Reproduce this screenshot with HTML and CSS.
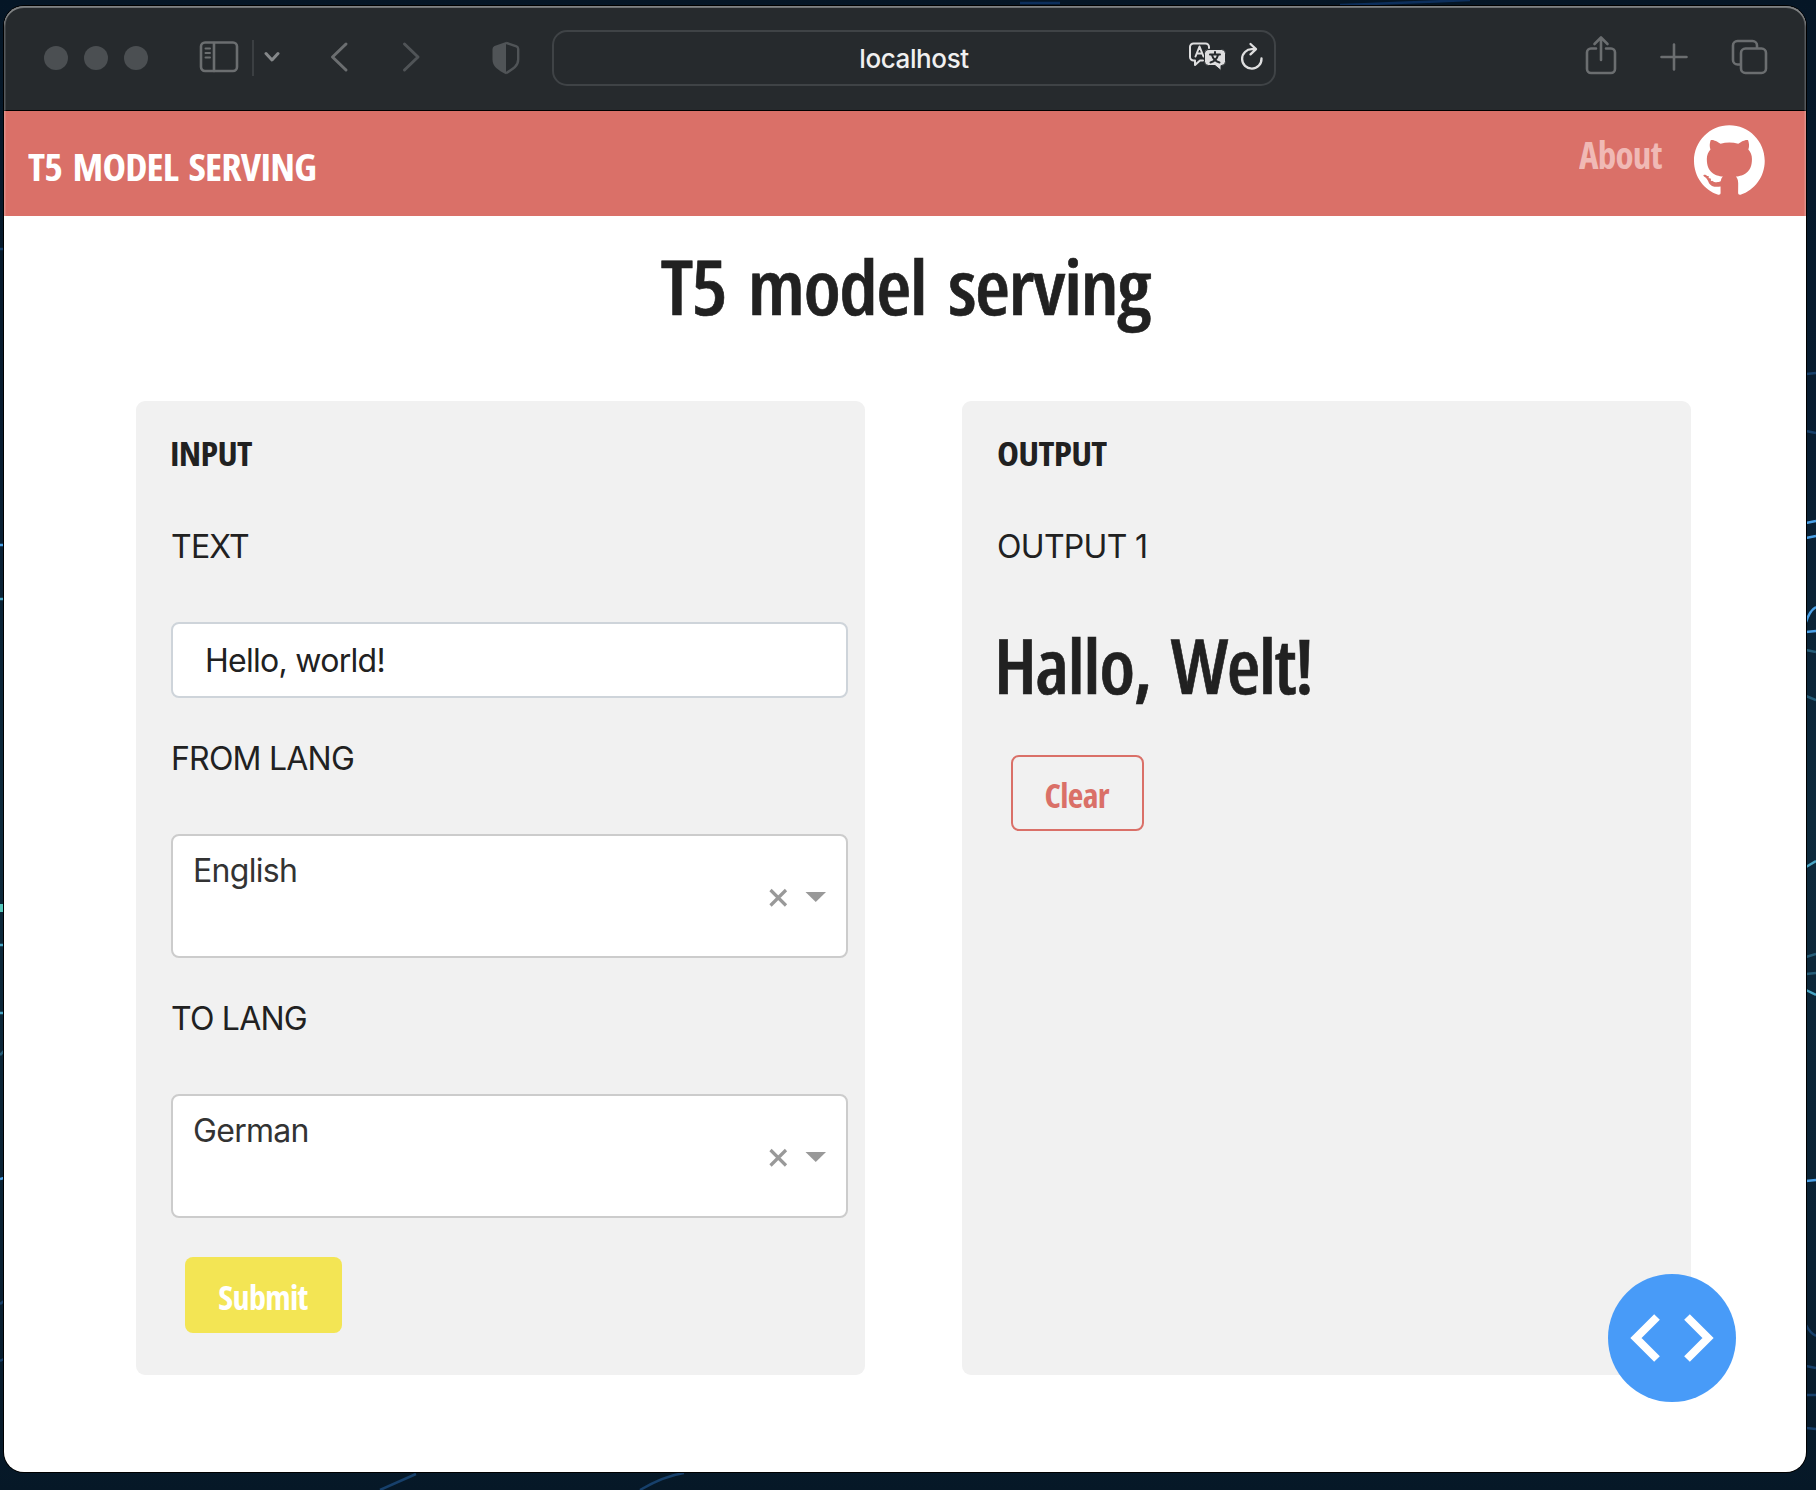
FILE: index.html
```html
<!DOCTYPE html>
<html lang="en">
<head>
<meta charset="utf-8">
<title>T5 model serving</title>
<link rel="stylesheet" href="styles.css">
</head>
<body>
<svg class="wallpaper" width="1816" height="1490" viewBox="0 0 1816 1490">
  <g stroke="#17406b">
    <path d="M1806 374l10-1M1806 431l10 2M1806 1325q4 8 10 11M1806 1366l10 2M1806 1395h10M1806 1428l10 1M0 249h4M0 1304l4-3M0 1361l4-2M640 1490q24-14 44-17M380 1490l36-16"/>
  </g>
  <g stroke="#0d2f5c">
    <path d="M1340 5q60-2 130-5M1020 3h40"/>
  </g>
  <g stroke="#4aa0e6">
    <path d="M1806 523l10-2M1806 538l10-2M1806 622q4-12 10-15M1806 632l10-1M1806 1181l10-1M0 545h4M0 1179l4-1"/>
  </g>
  <g stroke="#48a5c4">
    <path d="M1806 867l10-6M1806 990l10 5M0 599h4M0 945h4M0 1013h4"/>
  </g>
  <g stroke="#255d78">
    <path d="M1806 650l10 2M1806 696l10 4M1806 957l10-3M1806 974l10-1M0 1055l4-4"/>
  </g>
  <path stroke="#57c8bd" stroke-width="8" d="M0 908h4"/>
</svg>
<main class="window">
  <header class="toolbar">
    <div class="lights"><i></i><i></i><i></i></div>
    <svg class="ic sidebar" width="40" height="32" viewBox="0 0 40 32"><rect x="2" y="1.500" width="36" height="28.500" rx="4"/><path d="M15 2v28"/><path class="rows" d="M6.500 7.500h4.500M6.500 12h4.500M6.500 16.500h4.500"/></svg>
    <span class="divider"></span>
    <svg class="ic chev" width="16" height="12" viewBox="0 0 16 12"><path d="M2 2.500L8 9l6-6.500"/></svg>
    <svg class="ic back" width="20" height="32" viewBox="0 0 20 32"><path d="M17 3L3.500 16 17 29"/></svg>
    <svg class="ic fwd" width="20" height="32" viewBox="0 0 20 32"><path d="M3.500 3L17 16 3.500 29"/></svg>
    <svg class="shield" width="28" height="34" viewBox="0 0 28 34"><path class="line" d="M14 1.800L24.500 5.300Q26.200 6 26.200 8v10.500c0 6.500-5 9.500-12.200 13.700"/><path class="half" d="M14 1L2.500 5Q.500 5.800.500 8v10.500C.500 25.500 6 29 14 33.300z"/></svg>
    <div class="address">
      <span class="host">localhost</span>
      <svg class="translate" width="40" height="30" viewBox="0 0 40 30"><path class="o" d="M21 6V5a3.500 3.500 0 0 0-3.500-3.500h-12A3.500 3.500 0 0 0 2 5v10a3.500 3.500 0 0 0 3.500 3.500H7V23l5-4.500h3"/><path class="o" d="M7.500 14.500l4-10 4 10M9 11.500h5"/><path class="f" d="M20.500 7.500h13a4 4 0 0 1 4 4V19.500a4 4 0 0 1-4 4H33v5l-6-5h-6.500a4 4 0 0 1-4-4v-8a4 4 0 0 1 4-4z"/><path class="d" d="M22 12.500h10M27 10v2.500M30 13c-1 4-4 6.500-7.500 7.500M24 13c1 4 4 6.500 7.500 7.500"/></svg>
      <svg class="reload" width="24" height="30" viewBox="0 0 24 30"><path d="M21.500 16.500A9.700 9.700 0 1 1 12 7.200h3.500M10.500 2l5.500 5.200-5.500 5.200"/></svg>
    </div>
    <svg class="ic share" width="32" height="40" viewBox="0 0 32 40"><path d="M11 13.500H6a4 4 0 0 0-4 4V34a4 4 0 0 0 4 4h20a4 4 0 0 0 4-4V17.500a4 4 0 0 0-4-4h-5M16 25V3M9.500 9L16 2.500 22.500 9"/></svg>
    <svg class="ic plus" width="28" height="28" viewBox="0 0 28 28"><path d="M14 1.500v25M1.500 14h25"/></svg>
    <svg class="ic tabs" width="38" height="36" viewBox="0 0 38 36"><rect x="11" y="9.500" width="25" height="24.500" rx="4.500"/><path d="M10 25.500H7.500A4.500 4.500 0 0 1 3 21V6.500A4.500 4.500 0 0 1 7.500 2h15A4.500 4.500 0 0 1 27 6.500V8.500"/></svg>
  </header>
  <nav class="navbar">
    <a class="brand">T5 MODEL SERVING</a>
    <a class="about">About</a>
    <svg class="github" width="71" height="70" viewBox="0 0 98 96"><path d="M48.854 0C21.839 0 0 22 0 49.217c0 21.756 13.993 40.172 33.405 46.690 2.427.490 3.316-1.059 3.316-2.362 0-1.141-.080-5.052-.080-9.127-13.590 2.934-16.420-5.867-16.420-5.867-2.184-5.704-5.420-7.170-5.420-7.170-4.448-3.015.324-3.015.324-3.015 4.934.326 7.523 5.052 7.523 5.052 4.367 7.496 11.404 5.378 14.235 4.074.404-3.178 1.699-5.378 3.074-6.600-10.839-1.141-22.243-5.378-22.243-24.283 0-5.378 1.940-9.778 5.014-13.200-.485-1.222-2.184-6.275.486-13.038 0 0 4.125-1.304 13.426 5.052a46.970 46.970 0 0 1 12.214-1.630c4.125 0 8.330.571 12.213 1.630 9.302-6.356 13.427-5.052 13.427-5.052 2.670 6.763.970 11.816.485 13.038 3.155 3.422 5.015 7.822 5.015 13.200 0 18.905-11.404 23.060-22.324 24.283 1.780 1.548 3.316 4.481 3.316 9.126 0 6.600-.080 11.897-.080 13.526 0 1.304.890 2.853 3.316 2.364 19.412-6.520 33.405-24.935 33.405-46.691C97.707 22 75.788 0 48.854 0z"/><g><circle cx="18.500" cy="69" r="1.200"/><circle cx="21.500" cy="72" r="1.300"/><circle cx="24.500" cy="75.500" r="1.400"/><circle cx="28.500" cy="77" r="1.400"/><circle cx="33" cy="77" r="1.400"/></g></svg>
  </nav>
  <h1 class="title"><span>T5 model serving</span></h1>
  <div class="columns">
    <section class="card input">
      <h2>INPUT</h2>
      <label>TEXT</label>
      <div class="textbox">Hello, world!</div>
      <label>FROM LANG</label>
      <div class="select"><span class="value">English</span><svg class="controls" width="60" height="24" viewBox="0 0 60 24"><path class="x" d="M4.500 4l15.500 15.500M20 4L4.500 19.500"/><path class="arrow" d="M39.500 6h20.500l-10.250 10z"/></svg></div>
      <label>TO LANG</label>
      <div class="select"><span class="value">German</span><svg class="controls" width="60" height="24" viewBox="0 0 60 24"><path class="x" d="M4.500 4l15.500 15.500M20 4L4.500 19.500"/><path class="arrow" d="M39.500 6h20.500l-10.250 10z"/></svg></div>
      <button class="btn submit"><span>Submit</span></button>
    </section>
    <section class="card output">
      <h2>OUTPUT</h2>
      <label>OUTPUT 1</label>
      <p class="result">Hallo, Welt!</p>
      <button class="btn clear"><span>Clear</span></button>
    </section>
  </div>
  <div class="debug"><svg width="128" height="128" viewBox="0 0 128 128"><path d="M49 43L28 64l21 21M79 43l21 21-21 21"/></svg></div>
</main>
</body>
</html>
```

FILE: styles.css
```css
* { box-sizing: border-box; }
body { margin: 0; height: 1490px; overflow: hidden; background: linear-gradient(#051626 0%, #081d31 30%, #0d2a3c 55%, #0a2133 85%, #061827 100%); font-family: Inter, "Liberation Sans", sans-serif; color: #212121; }
.wallpaper { position: absolute; left: 0; top: 0; fill: none; stroke-width: 2.5; }
.window { position: relative; margin: 6px 0 0 4px; width: 1802px; height: 1466px; background: #fff; border-radius: 20px; overflow: hidden; box-shadow: 0 0 0 1px #000; }
.window::after { content: ""; position: absolute; inset: 0; border-radius: 20px; box-shadow: inset 0 0 0 1.5px rgba(255, 255, 255, .22), inset 0 2px 0 rgba(255, 255, 255, .25); pointer-events: none; }

.toolbar { height: 105px; background: #262a2d; border-bottom: 1px solid #000; display: flex; align-items: center; padding-left: 40px; }
.lights { display: flex; gap: 16px; }
.lights i { width: 24px; height: 24px; border-radius: 50%; background: #4b4f52; }
.ic { fill: none; stroke: #6b6e70; stroke-width: 2.600; stroke-linecap: round; stroke-linejoin: round; margin-bottom: 2px; flex: none; }
.sidebar { margin-left: 51px; }
.sidebar .rows { stroke-width: 2; }
.divider { width: 2px; height: 36px; margin-left: 13px; background: #3b3f42; }
.chev { margin-left: 10px; stroke: #85888a; stroke-width: 3; }
.back { margin-left: 49px; stroke-width: 3; }
.fwd { margin-left: 52px; stroke: #505457; stroke-width: 3; }
.shield { margin-left: 71px; flex: none; margin-bottom: 1px; }
.shield .line { fill: none; stroke: #505457; stroke-width: 2.400; }
.shield .half { fill: #505457; }
.address { width: 724px; height: 56px; margin-left: 32px; padding: 0 10px 0 86px; border: 2px solid #3f4346; border-radius: 15px; display: flex; align-items: center; flex: none; }
.host { flex: 1; padding-top: 1px; text-align: center; font-size: 26px; font-weight: 500; letter-spacing: -.4px; line-height: 40px; color: #f0f0f0; }
.translate { margin-right: 12px; margin-bottom: 3px; fill: none; stroke-linecap: round; stroke-linejoin: round; }
.translate .o { stroke: #dededf; stroke-width: 2; }
.translate .f { fill: #dededf; stroke: #262a2d; stroke-width: 1; }
.translate .d { stroke: #262a2d; stroke-width: 2; }
.reload { fill: none; stroke: #dededf; stroke-width: 2.300; stroke-linecap: round; stroke-linejoin: round; margin-bottom: 3px; }
.share { margin-left: 309px; margin-bottom: 6px; }
.plus { margin-left: 43px; margin-bottom: 3px; }
.tabs { margin-left: 42px; }

.title, .result, .brand, .about, h2, .btn { font-family: "Open Sans", sans-serif; font-stretch: 75%; letter-spacing: -.02em; }
.brand, .about, h2, .result { transform-origin: left; }

.navbar { height: 105px; background: #da7068; display: flex; align-items: flex-start; padding: 0 41px 0 24px; font-size: 38px; font-weight: 700; line-height: 50px; color: #fff; }
.brand { margin-top: 30px; word-spacing: .1em; transform: scaleX(1.047); }
.about { margin: 18px 30px 0 auto; color: #f0b9b5; transform: scaleX(.975); }
.github { margin-top: 14px; fill: #fff; }

.title { margin: 25px 0 70px; text-align: center; font-size: 75.500px; font-weight: 600; line-height: 90px; word-spacing: .11em; -webkit-text-stroke: .6px; }
.title span { display: inline-block; transform: scaleX(1.067); }
.columns { display: flex; gap: 97px; padding-left: 132px; }
.card { width: 729px; height: 974px; padding: 32px 17px 0 35px; border-radius: 9px; background: #f1f1f1; }
h2 { margin: 0 0 54px -1px; font-size: 33.500px; font-weight: 700; line-height: 40px; transform: scaleX(1.075); }
.output h2 { margin-left: 0; transform: scaleX(1.11); }
label { display: block; margin: 41px 0 55px; font-size: 32px; line-height: 40px; letter-spacing: -.78px; }
h2 + label { margin-top: 54px; }
.output label { margin-bottom: 53px; letter-spacing: -.7px; }
.textbox { height: 76px; padding-left: 32px; border: 2px solid #ced4da; border-radius: 8px; background: #fff; font-size: 32px; line-height: 74px; letter-spacing: -.72px; }
.select { height: 124px; padding: 0 20px 0 20px; border: 2px solid #ccc; border-radius: 8px; background: #fff; color: #333; display: flex; justify-content: space-between; font-size: 32px; letter-spacing: -.7px; }
.value { line-height: 70px; }
.controls { margin-top: 50px; }
.x { fill: none; stroke: #999; stroke-width: 3.200; }
.arrow { fill: #999; }
.btn { display: block; height: 76px; margin-left: 14px; padding: 3px 0 0; border-radius: 8px; font-size: 33.500px; font-weight: 700; line-height: 40px; }
.btn span { display: inline-block; transform: scaleX(1.015); }
.submit { width: 157px; margin-top: 39px; border: 0; background: #f3e554; color: #fff; }
.clear { width: 133px; padding-right: 2px; border: 2px solid #da7068; background: transparent; color: #da7068; }
.result { margin: 53px 0 45px -3px; font-size: 75.500px; font-weight: 600; line-height: 90px; word-spacing: .1em; -webkit-text-stroke: .6px; transform: scaleX(1.025); }
.debug { position: absolute; left: 1604px; top: 1268px; width: 128px; height: 128px; border-radius: 50%; background: #489bf8; }
.debug path { fill: none; stroke: #fff; stroke-width: 8; }
```
